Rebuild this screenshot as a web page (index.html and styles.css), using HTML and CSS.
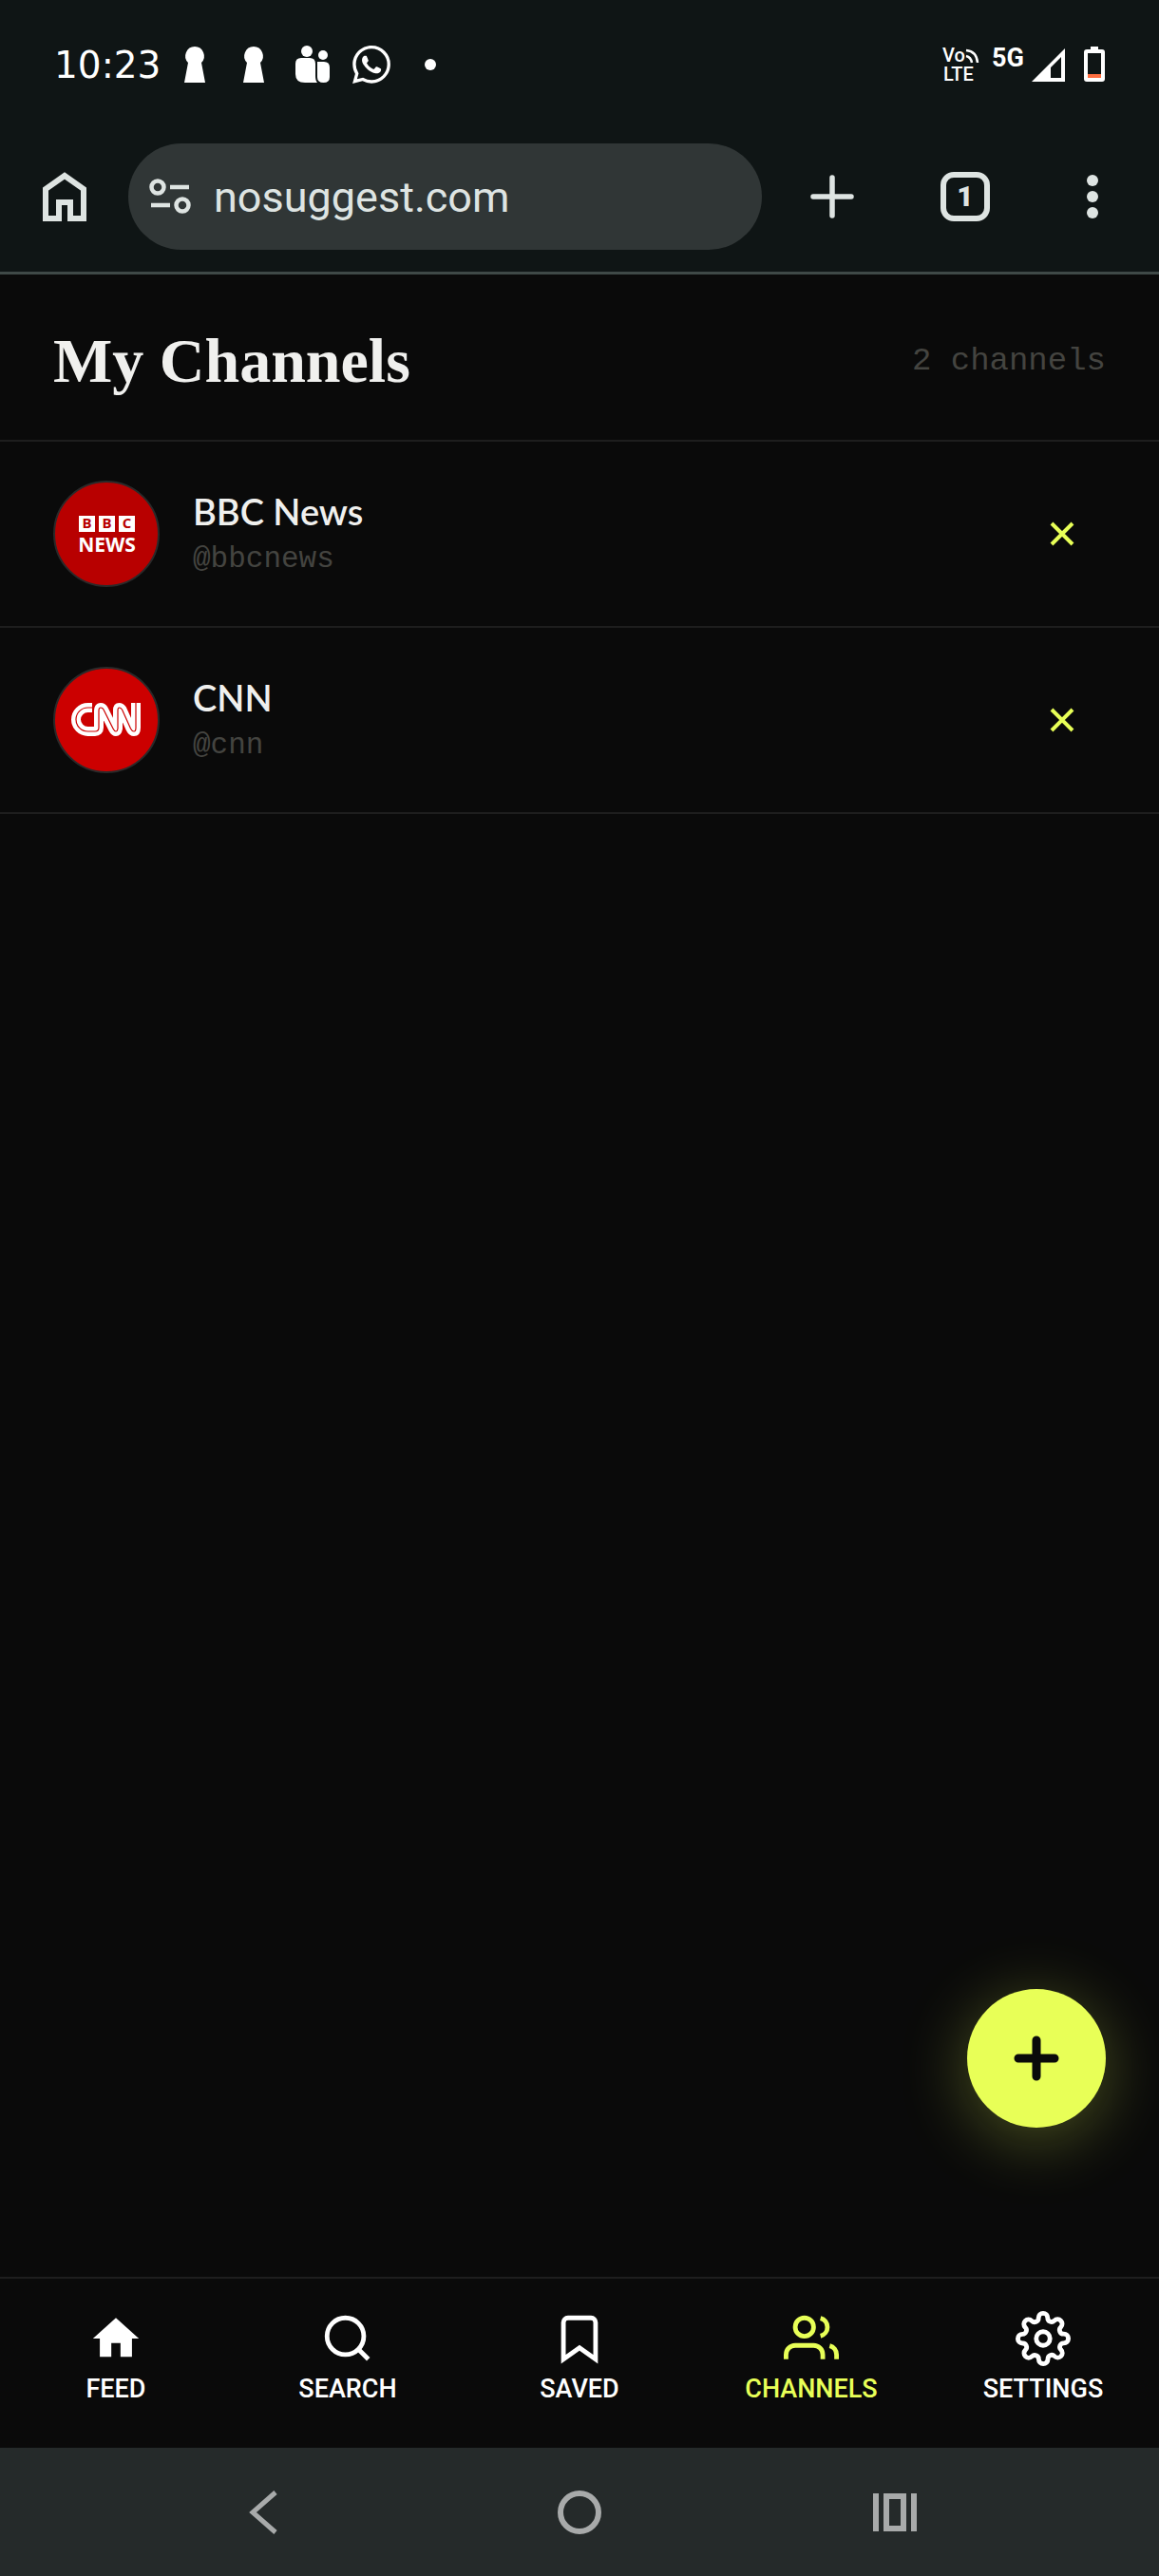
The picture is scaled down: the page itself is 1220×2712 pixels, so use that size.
FILE: index.html
```html
<!DOCTYPE html>
<html lang="en">
<head>
    <meta charset="UTF-8">
    <meta name="viewport" content="width=device-width, initial-scale=1.0">
    <title>My Channels</title>
    <link rel="stylesheet" href="styles.css">
</head>
<body>
    <div class="status-bar">
        <div class="status-left">
            <span class="clock">10:23</span>
            <svg class="status-icon" viewBox="0 0 40 40" fill="#fff"><path d="M20 1a10 10 0 0 1 7 17l4 21H9l4-21a10 10 0 0 1 7-17z"/></svg>
            <svg class="status-icon" viewBox="0 0 40 40" fill="#fff"><path d="M20 1a10 10 0 0 1 7 17l4 21H9l4-21a10 10 0 0 1 7-17z"/></svg>
            <svg class="status-icon" viewBox="0 0 40 40" fill="#fff">
                <circle cx="14" cy="6" r="6"/>
                <circle cx="31" cy="10" r="5"/>
                <path d="M8 13h9q6 0 6 6v13q0 5 2 7H12q-10 0-10-9V19q0-6 6-6z"/>
                <path d="M25 17h7q6 0 6 6v10q0 6-6.500 6T25 33z"/>
            </svg>
            <svg class="status-icon" viewBox="0 0 24 24" fill="#fff"><path d="M17.472 14.382c-.297-.149-1.758-.867-2.030-.967-.273-.099-.471-.148-.67.15-.197.297-.767.966-.94 1.164-.173.199-.347.223-.644.075-.297-.15-1.255-.463-2.390-1.475-.883-.788-1.480-1.761-1.653-2.059-.173-.297-.018-.458.13-.606.134-.133.298-.347.446-.52.149-.174.198-.298.298-.497.099-.198.05-.371-.025-.52-.075-.149-.669-1.612-.916-2.207-.242-.579-.487-.5-.669-.51-.173-.008-.371-.01-.57-.01-.198 0-.52.074-.792.372-.272.297-1.040 1.016-1.040 2.479 0 1.462 1.065 2.875 1.213 3.074.149.198 2.096 3.200 5.077 4.487.709.306 1.262.489 1.694.625.712.227 1.360.195 1.871.118.571-.085 1.758-.719 2.006-1.413.248-.694.248-1.289.173-1.413-.074-.124-.272-.198-.57-.347m-5.421 7.403h-.004a9.870 9.870 0 0 1-5.031-1.378l-.361-.214-3.741.982.998-3.648-.235-.374a9.860 9.860 0 0 1-1.510-5.260c.001-5.450 4.436-9.884 9.888-9.884 2.640 0 5.122 1.030 6.988 2.898a9.825 9.825 0 0 1 2.893 6.994c-.003 5.450-4.437 9.884-9.885 9.884m8.413-18.297A11.815 11.815 0 0 0 12.050 0C5.495 0 .16 5.335.157 11.892c0 2.096.547 4.142 1.588 5.945L.057 24l6.305-1.654a11.882 11.882 0 0 0 5.683 1.448h.005c6.554 0 11.890-5.335 11.893-11.893a11.821 11.821 0 0 0-3.480-8.413z"/></svg>
            <svg class="status-icon" viewBox="0 0 40 40" fill="#fff"><circle cx="20" cy="20" r="6"/></svg>
        </div>
        <div class="status-right">
            <svg class="volte" viewBox="-4 -6 48 50">
                <text class="volte-text" x="0" y="16">Vo</text>
                <text class="volte-text" x="1" y="36">LTE</text>
                <path d="M25 10q5 1 6 7M25 4q11 1 12 13" fill="none" stroke="#fff" stroke-width="2.500"/>
            </svg>
            <span class="network">5G</span>
            <svg class="signal" viewBox="0 0 35 38"><path fill="#fff" fill-rule="evenodd" d="M35 2v35H0zM31 11L20 22v11h11z"/></svg>
            <svg class="battery" viewBox="0 0 22 38">
                <path fill="#fff" d="M7 0h8v3h4q3 0 3 3v28q0 3-3 3H3q-3 0-3-3V6q0-3 3-3h4z"/>
                <path fill="#0f1515" d="M4 7h14v23H4z"/>
                <path fill="#ff6e40" d="M4 29h14v4H4z"/>
            </svg>
        </div>
    </div>

    <div class="toolbar">
        <button class="icon-btn home-btn" aria-label="Home">
            <svg width="46" height="52" viewBox="0 0 46 52" fill="none" stroke="#dee4e2" stroke-width="6"><path d="M3 49V18L23 4l20 14v31H29V32H17v17z"/></svg>
        </button>
        <div class="address-bar">
            <svg width="44" height="38" viewBox="0 0 44 38" fill="none" stroke="#dee4e2" stroke-width="4.500">
                <circle cx="9" cy="9" r="6.500"/>
                <circle cx="35" cy="28" r="6.500"/>
                <path d="M22 9h20M2 28h20"/>
            </svg>
            <input class="url-input" type="text" aria-label="Address" value="nosuggest.com">
        </div>
        <div class="toolbar-actions">
            <button class="icon-btn" aria-label="New tab">
                <svg width="52" height="52" viewBox="0 0 52 52" stroke="#dee4e2" stroke-width="5.500" stroke-linecap="round"><path d="M26 6v40M6 26h40"/></svg>
            </button>
            <button class="icon-btn tab-btn" aria-label="Tabs">1</button>
            <button class="icon-btn" aria-label="Menu">
                <svg width="40" height="52" viewBox="0 0 40 52" fill="#dee4e2"><circle cx="20" cy="9" r="6"/><circle cx="20" cy="26" r="6"/><circle cx="20" cy="43" r="6"/></svg>
            </button>
        </div>
    </div>

    <main class="content">
        <header class="page-header">
            <h1 class="page-title">My Channels</h1>
            <span class="channel-count">2 channels</span>
        </header>
        <ul class="channel-list">
            <li class="channel">
                <svg class="avatar" viewBox="0 0 112 112">
                    <circle cx="56" cy="56" r="55" fill="#b80000" stroke="#2a2a2a" stroke-width="2"/>
                    <path d="M27 37h17v17H27zM48 37h17v17H48zM69 37h17v17H69z" fill="#fff"/>
                    <text class="bbc-letter" x="35.500" y="50">B</text>
                    <text class="bbc-letter" x="56.500" y="50">B</text>
                    <text class="bbc-letter" x="77.500" y="50">C</text>
                    <text class="bbc-news" x="56.500" y="75">NEWS</text>
                </svg>
                <div class="channel-info">
                    <div class="channel-name">BBC News</div>
                    <div class="channel-handle">@bbcnews</div>
                </div>
                <button class="remove-btn" aria-label="Remove BBC News">
                    <svg width="26" height="26" viewBox="0 0 26 26" stroke="#e8ff57" stroke-width="4"><path d="M2 2l22 22M24 2L2 24"/></svg>
                </button>
            </li>
            <li class="channel">
                <svg class="avatar" viewBox="0 0 112 112" fill="none">
                    <circle cx="56" cy="56" r="55" fill="#c00" stroke="#2a2a2a" stroke-width="2"/>
                    <path d="M41 43H36.500a12.500 12.500 0 0 0 0 25H44q4 0 4-4V46q0-3 2-3t3 2l10 20q1.500 3 3 3t2-3V46q0-3 1.500-3t3 2l9 20q1.500 3 3.500 3t2-4V38" stroke="#fff" stroke-width="10"/>
                    <path d="M41 43H36.500a12.500 12.500 0 0 0 0 25H44q4 0 4-4V46q0-3 2-3t3 2l10 20q1.500 3 3 3t2-3V46q0-3 1.500-3t3 2l9 20q1.500 3 3.500 3t2-4V38" stroke="#c00" stroke-width="1.200"/>
                </svg>
                <div class="channel-info">
                    <div class="channel-name">CNN</div>
                    <div class="channel-handle">@cnn</div>
                </div>
                <button class="remove-btn" aria-label="Remove CNN">
                    <svg width="26" height="26" viewBox="0 0 26 26" stroke="#e8ff57" stroke-width="4"><path d="M2 2l22 22M24 2L2 24"/></svg>
                </button>
            </li>
        </ul>
        <button class="add-btn" aria-label="Add channel">
            <svg width="48" height="48" viewBox="0 0 48 48" stroke="#0a0a0a" stroke-width="9" stroke-linecap="round"><path d="M24 5v38M5 24h38"/></svg>
        </button>
    </main>

    <nav class="bottom-nav">
        <a href="#" class="nav-item">
            <svg class="nav-icon" viewBox="0 0 24 24"><path fill="currentColor" stroke="none" d="M10 20v-6h4v6h5v-8h3L12 3 2 12h3v8z"/></svg>
            FEED
        </a>
        <a href="#" class="nav-item">
            <svg class="nav-icon" viewBox="0 0 24 24"><circle cx="11" cy="11" r="8"/><path d="M21 21l-4.350-4.350"/></svg>
            SEARCH
        </a>
        <a href="#" class="nav-item">
            <svg class="nav-icon" viewBox="0 0 24 24"><path d="M19 21l-7-5-7 5V5a2 2 0 0 1 2-2h10a2 2 0 0 1 2 2z"/></svg>
            SAVED
        </a>
        <a href="#" class="nav-item active">
            <svg class="nav-icon" viewBox="0 0 24 24"><path d="M17 21v-2a4 4 0 0 0-4-4H5a4 4 0 0 0-4 4v2"/><circle cx="9" cy="7" r="4"/><path d="M23 21v-2a4 4 0 0 0-3-3.870M16 3.130a4 4 0 0 1 0 7.750"/></svg>
            CHANNELS
        </a>
        <a href="#" class="nav-item">
            <svg class="nav-icon" viewBox="0 0 24 24"><circle cx="12" cy="12" r="3"/><path d="M19.400 15a1.650 1.650 0 0 0 .33 1.820l.06.06a2 2 0 0 1-2.830 2.830l-.06-.06a1.650 1.650 0 0 0-1.820-.33 1.650 1.650 0 0 0-1 1.510V21a2 2 0 0 1-4 0v-.09A1.650 1.650 0 0 0 9 19.400a1.650 1.650 0 0 0-1.820.33l-.06.06a2 2 0 0 1-2.830-2.830l.06-.06a1.650 1.650 0 0 0 .33-1.820 1.650 1.650 0 0 0-1.510-1H3a2 2 0 0 1 0-4h.09A1.650 1.650 0 0 0 4.600 9a1.650 1.650 0 0 0-.33-1.820l-.06-.06a2 2 0 0 1 2.830-2.830l.06.06a1.650 1.650 0 0 0 1.820.33H9a1.650 1.650 0 0 0 1-1.510V3a2 2 0 0 1 4 0v.09a1.650 1.650 0 0 0 1 1.510 1.650 1.650 0 0 0 1.820-.33l.06-.06a2 2 0 0 1 2.830 2.830l-.06.06a1.650 1.650 0 0 0-.33 1.820V9a1.650 1.650 0 0 0 1.510 1H21a2 2 0 0 1 0 4h-.09a1.650 1.650 0 0 0-1.510 1z"/></svg>
            SETTINGS
        </a>
    </nav>

    <div class="system-nav">
        <button class="icon-btn" aria-label="Back">
            <svg width="46" height="46" viewBox="0 0 46 46" fill="none" stroke="#a8aaaa" stroke-width="5"><path d="M35 2L11 23l24 21"/></svg>
        </button>
        <button class="icon-btn" aria-label="Home screen">
            <svg width="46" height="46" viewBox="0 0 46 46" fill="none" stroke="#a8aaaa" stroke-width="6"><circle cx="23" cy="23" r="20"/></svg>
        </button>
        <button class="icon-btn" aria-label="Recent apps">
            <svg width="46" height="46" viewBox="0 0 46 46" fill="none" stroke="#a8aaaa" stroke-width="6"><path d="M3 3v40M43 3v40M14 6h18v34H14z"/></svg>
        </button>
    </div>
</body>
</html>
```
FILE: styles.css
```css
* {
    margin: 0;
    padding: 0;
    box-sizing: border-box;
}
body {
    display: flex;
    flex-direction: column;
    min-height: 100vh;
    background-color: #0a0a0a;
    color: #f0f0ee;
    font-family: Roboto, "Liberation Sans", sans-serif;
}
button {
    border: none;
    background: none;
    cursor: pointer;
}
svg {
    display: block;
    flex-shrink: 0;
}

/* phone status bar */
.status-bar {
    display: flex;
    justify-content: space-between;
    align-items: center;
    height: 136px;
    padding: 0 57px;
    background-color: #0f1515;
    color: white;
}
.status-left {
    display: flex;
    align-items: center;
    gap: 22px;
}
.clock {
    width: 106px;
    font-family: "DejaVu Sans", sans-serif;
    font-size: 39px;
    white-space: nowrap;
}
.status-icon {
    width: 40px;
    height: 40px;
}
.status-right {
    display: flex;
    align-items: center;
}
.volte {
    width: 48px;
    height: 50px;
    margin-right: 8px;
}
.volte-text {
    fill: white;
    font-size: 20px;
    font-weight: 500;
}
.network {
    padding-bottom: 14px;
    margin-right: 8px;
    font-size: 27px;
    line-height: 24px;
    font-weight: 700;
}
.signal {
    width: 35px;
    height: 38px;
    margin-right: 20px;
}
.battery {
    width: 22px;
    height: 38px;
}

/* browser toolbar */
.toolbar {
    display: flex;
    align-items: center;
    gap: 44px;
    padding: 15px 50px 23px 45px;
    background-color: #0f1515;
    border-bottom: 3px solid #3f4947;
}
.address-bar {
    display: flex;
    flex: 1;
    align-items: center;
    gap: 24px;
    min-width: 0;
    height: 112px;
    padding: 0 22px;
    border-radius: 56px;
    background-color: #303636;
}
.url-input {
    flex: 1;
    min-width: 0;
    border: none;
    outline: none;
    background: none;
    color: #dee4e2;
    font-family: inherit;
    font-size: 45px;
}
.toolbar-actions {
    display: flex;
    align-items: center;
    gap: 88px;
    padding-left: 4px;
}
.tab-btn {
    width: 52px;
    height: 52px;
    border: 6px solid #dee4e2;
    border-radius: 14px;
    color: #dee4e2;
    font-family: Roboto, sans-serif;
    font-size: 30px;
    line-height: 40px;
    font-weight: 900;
}

/* channels page */
.content {
    position: relative;
    flex: 1;
}
.page-header {
    display: flex;
    justify-content: space-between;
    align-items: center;
    padding: 54px 56px 46px;
    border-bottom: 2px solid #1e1e1e;
}
.page-title {
    font-family: "Liberation Serif", serif;
    font-size: 66px;
    line-height: 74px;
    font-weight: 700;
}
.channel-count {
    color: #444440;
    font-family: "Liberation Mono", monospace;
    font-size: 34px;
}
.channel-list {
    list-style: none;
}
.channel {
    display: flex;
    align-items: center;
    padding: 41px 56px;
    border-bottom: 2px solid #1e1e1e;
}
.avatar {
    width: 112px;
    height: 112px;
    margin-right: 35px;
}
.bbc-letter {
    fill: #b80000;
    font-family: "Open Sans", sans-serif;
    font-size: 15px;
    font-weight: 700;
    text-anchor: middle;
}
.bbc-news {
    fill: white;
    font-family: "Open Sans", sans-serif;
    font-size: 21px;
    font-weight: 700;
    text-anchor: middle;
}
.channel-info {
    display: flex;
    flex: 1;
    flex-direction: column;
    gap: 8px;
}
.channel-name {
    font-family: Lato, sans-serif;
    font-size: 38px;
    line-height: 46px;
    font-weight: 600;
}
.channel-handle {
    color: #444440;
    font-family: "Liberation Mono", monospace;
    font-size: 31px;
    line-height: 40px;
}
.remove-btn {
    display: flex;
    justify-content: center;
    align-items: center;
    width: 92px;
    height: 92px;
}
.add-btn {
    position: absolute;
    right: 56px;
    bottom: 157px;
    display: flex;
    justify-content: center;
    align-items: center;
    width: 146px;
    height: 146px;
    border-radius: 50%;
    background-color: #e8ff57;
    box-shadow: 0 12px 70px rgba(232, 255, 87, 0.3);
}

/* bottom navigation */
.bottom-nav {
    display: flex;
    height: 180px;
    border-top: 2px solid #1e1e1e;
}
.nav-item {
    display: flex;
    flex: 1;
    flex-direction: column;
    align-items: center;
    gap: 8px;
    padding-top: 34px;
    color: white;
    font-size: 27px;
    line-height: 32px;
    font-weight: 500;
    text-decoration: none;
}
.nav-item.active {
    color: #e8ff57;
}
.nav-icon {
    width: 58px;
    height: 58px;
    fill: none;
    stroke: currentColor;
    stroke-width: 2;
}
.system-nav {
    display: flex;
    justify-content: center;
    align-items: center;
    gap: 286px;
    height: 135px;
    background-color: #252a2a;
}
```
